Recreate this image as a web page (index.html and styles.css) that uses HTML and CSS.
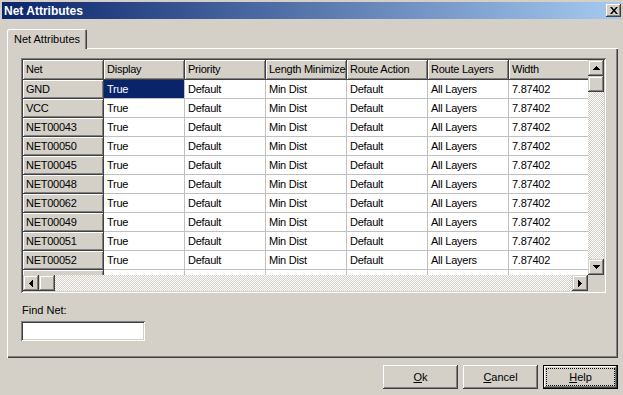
FILE: index.html
```html
<!DOCTYPE html>
<html lang="en">
<head>
    <meta charset="UTF-8">
    <meta name="viewport" content="width=device-width, initial-scale=1.0">
    <title>Net Attributes</title>
    <link rel="stylesheet" href="styles.css">
</head>
<body>
<div class="window">
    <div class="titlebar">
        <span class="title">Net Attributes</span>
        <button class="close-btn">
            <svg width="8" height="7" viewBox="0 0 8 7"><path d="M0 0h2l2 2.5L6 0h2L5 3.5 8 7H6L4 4.5 2 7H0l3-3.5z" fill="#000"/></svg>
        </button>
    </div>

    <div class="main">
        <div class="tabs">
            <div class="tab">Net Attributes</div>
        </div>

        <div class="panel">
            <div class="grid">
                <div class="viewport">
                    <div class="row head">
                        <div class="cell fixed">Net</div>
                        <div class="cell fixed">Display</div>
                        <div class="cell fixed">Priority</div>
                        <div class="cell fixed">Length Minimize</div>
                        <div class="cell fixed">Route Action</div>
                        <div class="cell fixed">Route Layers</div>
                        <div class="cell fixed">Width</div>
                    </div>
                    <div class="row">
                        <div class="cell fixed">GND</div>
                        <div class="cell selected">True</div>
                        <div class="cell">Default</div>
                        <div class="cell">Min Dist</div>
                        <div class="cell">Default</div>
                        <div class="cell">All Layers</div>
                        <div class="cell">7.87402</div>
                    </div>
                    <div class="row">
                        <div class="cell fixed">VCC</div>
                        <div class="cell">True</div>
                        <div class="cell">Default</div>
                        <div class="cell">Min Dist</div>
                        <div class="cell">Default</div>
                        <div class="cell">All Layers</div>
                        <div class="cell">7.87402</div>
                    </div>
                    <div class="row">
                        <div class="cell fixed">NET00043</div>
                        <div class="cell">True</div>
                        <div class="cell">Default</div>
                        <div class="cell">Min Dist</div>
                        <div class="cell">Default</div>
                        <div class="cell">All Layers</div>
                        <div class="cell">7.87402</div>
                    </div>
                    <div class="row">
                        <div class="cell fixed">NET00050</div>
                        <div class="cell">True</div>
                        <div class="cell">Default</div>
                        <div class="cell">Min Dist</div>
                        <div class="cell">Default</div>
                        <div class="cell">All Layers</div>
                        <div class="cell">7.87402</div>
                    </div>
                    <div class="row">
                        <div class="cell fixed">NET00045</div>
                        <div class="cell">True</div>
                        <div class="cell">Default</div>
                        <div class="cell">Min Dist</div>
                        <div class="cell">Default</div>
                        <div class="cell">All Layers</div>
                        <div class="cell">7.87402</div>
                    </div>
                    <div class="row">
                        <div class="cell fixed">NET00048</div>
                        <div class="cell">True</div>
                        <div class="cell">Default</div>
                        <div class="cell">Min Dist</div>
                        <div class="cell">Default</div>
                        <div class="cell">All Layers</div>
                        <div class="cell">7.87402</div>
                    </div>
                    <div class="row">
                        <div class="cell fixed">NET00062</div>
                        <div class="cell">True</div>
                        <div class="cell">Default</div>
                        <div class="cell">Min Dist</div>
                        <div class="cell">Default</div>
                        <div class="cell">All Layers</div>
                        <div class="cell">7.87402</div>
                    </div>
                    <div class="row">
                        <div class="cell fixed">NET00049</div>
                        <div class="cell">True</div>
                        <div class="cell">Default</div>
                        <div class="cell">Min Dist</div>
                        <div class="cell">Default</div>
                        <div class="cell">All Layers</div>
                        <div class="cell">7.87402</div>
                    </div>
                    <div class="row">
                        <div class="cell fixed">NET00051</div>
                        <div class="cell">True</div>
                        <div class="cell">Default</div>
                        <div class="cell">Min Dist</div>
                        <div class="cell">Default</div>
                        <div class="cell">All Layers</div>
                        <div class="cell">7.87402</div>
                    </div>
                    <div class="row">
                        <div class="cell fixed">NET00052</div>
                        <div class="cell">True</div>
                        <div class="cell">Default</div>
                        <div class="cell">Min Dist</div>
                        <div class="cell">Default</div>
                        <div class="cell">All Layers</div>
                        <div class="cell">7.87402</div>
                    </div>
                    <div class="row">
                        <div class="cell fixed">NET00053</div>
                        <div class="cell">True</div>
                        <div class="cell">Default</div>
                        <div class="cell">Min Dist</div>
                        <div class="cell">Default</div>
                        <div class="cell">All Layers</div>
                        <div class="cell">7.87402</div>
                    </div>
                </div>

                <div class="vscroll">
                    <div class="sb-btn"><svg width="7" height="4" viewBox="0 0 7 4"><path d="M3 0h1v1h1v1h1v1h1v1H0V3h1V2h1V1h1z"/></svg></div>
                    <div class="sb-thumb"></div>
                    <div class="sb-track"></div>
                    <div class="sb-btn"><svg width="7" height="4" viewBox="0 0 7 4"><path d="M0 0h7v1H6v1H5v1H4v1H3V3H2V2H1V1H0z"/></svg></div>
                </div>

                <div class="hscroll">
                    <div class="sb-btn"><svg width="4" height="7" viewBox="0 0 4 7"><path d="M3 0h1v7H3V6H2V5H1V4H0V3h1V2h1V1h1z"/></svg></div>
                    <div class="sb-thumb"></div>
                    <div class="sb-track"></div>
                    <div class="sb-btn"><svg width="4" height="7" viewBox="0 0 4 7"><path d="M0 0h1v1h1v1h1v1h1v1H3v1H2v1H1v1H0z"/></svg></div>
                </div>

                <div class="corner"></div>
            </div>

            <label class="find-label" for="findNet">Find Net:</label>
            <input type="text" id="findNet" class="find-input">
        </div>

        <div class="footer">
            <button class="btn"><u>O</u>k</button>
            <button class="btn"><u>C</u>ancel</button>
            <button class="btn default"><u>H</u>elp</button>
        </div>
    </div>
</div>
</body>
</html>
```

FILE: styles.css
```css
html, body {
    margin: 0;
    padding: 0;
}
body {
    width: 623px;
    height: 395px;
    overflow: hidden;
    background-color: #d4d0c8;
    font-family: "Liberation Sans", Arial, sans-serif;
    font-size: 11px;
    color: #000;
}
.window {
    box-sizing: border-box;
    width: 623px;
    height: 395px;
    padding: 2px 2px 0 2px;
    display: flex;
    flex-direction: column;
}

/* title bar */
.titlebar {
    height: 17px;
    display: flex;
    align-items: center;
    justify-content: space-between;
    padding: 0 0 0 2px;
    background: linear-gradient(to right, #0a246a, #a6caf0);
}
.title {
    color: #fff;
    font-weight: bold;
    font-size: 12px;
}
.close-btn {
    width: 15px;
    height: 13px;
    padding: 0;
    border: none;
    background-color: #d4d0c8;
    display: flex;
    align-items: center;
    justify-content: center;
    box-shadow: inset -1px -1px #404040, inset 1px 1px #fff, inset -2px -2px #808080;
}

/* body */
.main {
    padding: 0 3px 0 5px;
}
.tabs {
    display: flex;
    margin-top: 10px;
}
.tab {
    position: relative;
    z-index: 1;
    width: 80px;
    height: 20px;
    line-height: 20px;
    text-align: center;
    margin-bottom: -1px;
    background-color: #d4d0c8;
    border-radius: 2px 2px 0 0;
    box-shadow: inset 1px 1px #fff, inset -1px 0 #404040, inset -2px 0 #808080;
}
.panel {
    box-sizing: border-box;
    height: 310px;
    padding: 10px 12px 0 14px;
    box-shadow: inset 1px 1px #fff, inset -1px -1px #404040, inset -2px -2px #808080;
}

/* grid */
.grid {
    box-sizing: border-box;
    width: 585px;
    padding: 2px;
    display: grid;
    grid-template-columns: 565px 16px;
    grid-template-rows: 215px 16px;
    box-shadow: inset 1px 1px #808080, inset -1px -1px #fff, inset 2px 2px #404040, inset -2px -2px #d4d0c8;
}
.viewport {
    overflow: hidden;
    background-color: #fff;
}
.row {
    display: flex;
}
.cell {
    box-sizing: border-box;
    flex: 0 0 81px;
    height: 19px;
    line-height: 18px;
    padding-left: 3px;
    letter-spacing: -0.25px;
    white-space: nowrap;
    overflow: hidden;
    background-color: #fff;
    border-right: 1px solid #c0c0c0;
    border-bottom: 1px solid #c0c0c0;
}
.cell.fixed {
    background-color: #d4d0c8;
    border-right-color: #404040;
    border-bottom-color: #404040;
    box-shadow: inset 1px 1px #fff, inset -1px -1px #808080;
}
.head .cell {
    height: 20px;
    line-height: 19px;
}
.cell.selected {
    background-color: #0a246a;
    color: #fff;
}

/* scrollbars */
.vscroll, .hscroll {
    display: flex;
}
.vscroll {
    flex-direction: column;
}
.sb-btn, .sb-thumb {
    flex: 0 0 16px;
    height: 16px;
    width: 16px;
    display: flex;
    align-items: center;
    justify-content: center;
    background-color: #d4d0c8;
    box-shadow: inset -1px -1px #404040, inset 1px 1px #d4d0c8, inset -2px -2px #808080, inset 2px 2px #fff;
}
.sb-track {
    flex: 1;
    background-color: #fff;
    background-image: repeating-conic-gradient(#d4d0c8 0 25%, #fff 0 50%);
    background-size: 2px 2px;
}
.corner {
    background-color: #d4d0c8;
}

/* find */
.find-label {
    display: block;
    margin-top: 11px;
    line-height: 13px;
    padding-left: 1px;
}
.find-input {
    display: block;
    box-sizing: border-box;
    width: 124px;
    height: 20px;
    margin: 4px 0 0 0;
    border: none;
    outline: none;
    background-color: #fff;
    box-shadow: inset 1px 1px #808080, inset -1px -1px #fff, inset 2px 2px #404040, inset -2px -2px #d4d0c8;
}

/* buttons */
.footer {
    display: flex;
    justify-content: flex-end;
    gap: 5px;
    padding-top: 7px;
}
.btn {
    position: relative;
    width: 75px;
    height: 24px;
    padding: 0;
    border: none;
    background-color: #d4d0c8;
    font-family: "Liberation Sans", Arial, sans-serif;
    font-size: 11px;
    color: #000;
    box-shadow: inset -1px -1px #404040, inset 1px 1px #fff, inset -2px -2px #808080;
}
.btn.default {
    box-shadow: inset 0 0 0 1px #000, inset -2px -2px #404040, inset 2px 2px #fff, inset -3px -3px #808080;
}
.btn.default::after {
    content: "";
    position: absolute;
    top: 3px;
    left: 3px;
    right: 3px;
    bottom: 3px;
    border: 1px dotted #000;
}
```
